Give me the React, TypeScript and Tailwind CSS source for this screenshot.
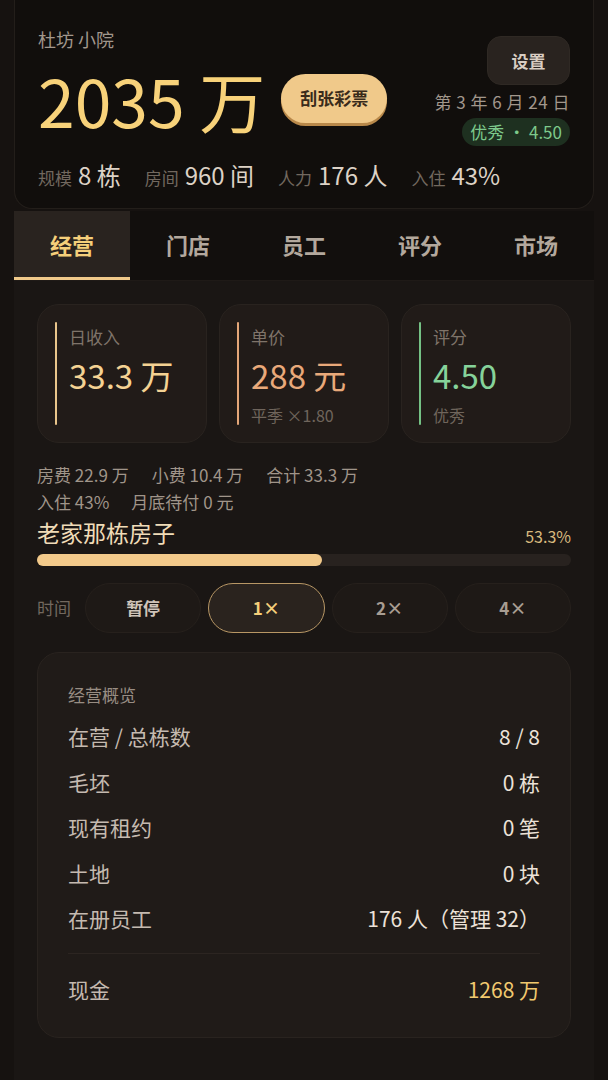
import { useState } from "react";

const FONT = { fontFamily: '"Noto Sans CJK SC", "Noto Sans", sans-serif' };

const TABS = ["经营", "门店", "员工", "评分", "市场"];

const SPEEDS = ["暂停", "1×", "2×", "4×"];

const OVERVIEW = [
  { label: "在营 / 总栋数", value: "8 / 8" },
  { label: "毛坯", value: "0 栋" },
  { label: "现有租约", value: "0 笔" },
  { label: "土地", value: "0 块" },
  { label: "在册员工", value: "176 人（管理 32）" },
];

function StatCard({
  label,
  value,
  sub,
  bar,
  tone,
}: {
  label: string;
  value: string;
  sub?: string;
  bar: string;
  tone: string;
}) {
  return (
    <div className="flex h-[139px] rounded-[22px] border border-[#29231f] bg-[#211b18] px-[17px] py-[17px]">
      <div className={`w-[2px] rounded-full ${bar}`} />
      <div className="flex flex-col pl-[12px] pt-[3px]">
        <span className="text-[17px] leading-[24px] text-[#7f746a]">{label}</span>
        <span className={`mt-[6px] text-[33px] leading-[40px] ${tone}`}>{value}</span>
        {sub && <span className="mt-[9px] text-[16px] leading-[22px] text-[#6f655c]">{sub}</span>}
      </div>
    </div>
  );
}

export default function App() {
  const [tab, setTab] = useState(0);
  const [speed, setSpeed] = useState(1);

  return (
    <div className="min-h-[1080px] w-[608px] bg-[#161210]" style={FONT}>
      <div className="mx-[14px] flex flex-col">
        {/* header */}
        <div className="h-[209px] rounded-b-[18px] border-x border-b border-[#231e1a] bg-[#110e0c] px-[23px] pt-[26px]">
          <div className="flex justify-between">
            <div className="flex flex-col">
              <span className="text-[18px] leading-[26px] text-[#a2978c]">杜坊 小院</span>
              <div className="mt-[12px] flex items-center">
                <span className="text-[66px] leading-[70px] text-[#f8d27a]">2035 万</span>
                <button className="ml-[16px] mb-[2px] h-[49px] w-[106px] rounded-full bg-[#f0c98a] text-[17px] font-bold text-[#3a2b1b] shadow-[0_3px_0_#b8884a]">
                  刮张彩票
                </button>
              </div>
            </div>
            <div className="flex flex-col items-end">
              <button className="mt-[10px] h-[49px] w-[83px] rounded-[14px] border border-[#2f2924] bg-[#29231f] text-[17px] font-bold text-[#d8cdc2]">
                设置
              </button>
              <span className="mt-[5px] text-[17px] leading-[24px] tracking-[0.5px] text-[#a2978c]">第 3 年 6 月 24 日</span>
              <span className="mt-[4px] rounded-full bg-[#1e3020] px-[8px] text-[17px] leading-[28px] text-[#7dc98b]">
                优秀 · 4.50
              </span>
            </div>
          </div>
          <div className="mt-[14px] flex items-baseline gap-[24px]">
            {[
              ["规模", "8 栋"],
              ["房间", "960 间"],
              ["人力", "176 人"],
              ["入住", "43%"],
            ].map(([k, v]) => (
              <span key={k} className="flex items-baseline gap-[6px]">
                <span className="text-[17px] text-[#72685f]">{k}</span>
                <span className="text-[24px] leading-[30px] text-[#ddd2c6]">{v}</span>
              </span>
            ))}
          </div>
        </div>

        {/* tabs */}
        <div className="mt-[2px] grid h-[70px] grid-cols-5 border-b border-[#1f1a17] bg-[#120f0d]">
          {TABS.map((t, i) => (
            <button
              key={t}
              onClick={() => setTab(i)}
              className={`relative pb-[3px] text-[22px] font-bold ${
                i === tab ? "bg-[#29231f] text-[#f5cf7a]" : "text-[#b3a89d]"
              }`}
            >
              {t}
              {i === tab && <span className="absolute inset-x-0 bottom-0 h-[3px] bg-[#f0c98a]" />}
            </button>
          ))}
        </div>

        {/* body */}
        <div className="flex min-h-[800px] flex-col bg-[#1a1614] px-[23px] pt-[23px]">
          <div className="grid grid-cols-3 gap-[12px]">
            <StatCard label="日收入" value="33.3 万" bar="bg-[#e9c58b]" tone="text-[#f4d293]" />
            <StatCard label="单价" value="288 元" sub="平季 ×1.80" bar="bg-[#e3a678]" tone="text-[#e9a97a]" />
            <StatCard label="评分" value="4.50" sub="优秀" bar="bg-[#74c184]" tone="text-[#86d39a]" />
          </div>

          <div className="mt-[18px] flex flex-col text-[17px] leading-[27px] text-[#a0958a]">
            <span className="flex gap-[23px]">
              <span>房费 22.9 万</span>
              <span>小费 10.4 万</span>
              <span>合计 33.3 万</span>
            </span>
            <span className="flex gap-[22px]">
              <span>入住 43%</span>
              <span>月底待付 0 元</span>
            </span>
          </div>

          <div className="mt-[1px] flex items-end justify-between">
            <span className="text-[23px] leading-[32px] text-[#f0dcb8]">老家那栋房子</span>
            <span className="text-[16px] leading-[24px] text-[#d8b97e]">53.3%</span>
          </div>
          <div className="mt-[6px] h-[12px] rounded-full bg-[#28221f]">
            <div className="h-full rounded-full bg-[#f2c98a]" style={{ width: "53.3%" }} />
          </div>

          <div className="mt-[17px] flex items-center gap-[7px]">
            <span className="w-[41px] text-[17px] text-[#72685f]">时间</span>
            {SPEEDS.map((s, i) => (
              <button
                key={s}
                onClick={() => setSpeed(i)}
                className={`h-[50px] flex-1 rounded-full border text-[17px] font-bold ${
                  i === speed
                    ? "border-[#b89765] bg-[#2a231e] text-[#f5cf7a]"
                    : i === 0
                      ? "border-[#26201c] bg-[#1e1916] text-[#cfc4b9]"
                      : "border-[#26201c] bg-[#1e1916] text-[#a89d92]"
                }`}
              >
                {s}
              </button>
            ))}
          </div>

          <div className="mt-[19px] rounded-[22px] border border-[#29231f] bg-[#201b18] px-[30px] pt-[30px] pb-[24px]">
            <div className="text-[17px] leading-[24px] text-[#988d83]">经营概览</div>
            <div className="mt-[7px] flex flex-col">
              {OVERVIEW.map((r) => (
                <div key={r.label} className="flex h-[45.5px] items-center justify-between text-[21px]">
                  <span className="text-[#c5bab0]">{r.label}</span>
                  <span className="text-[#ece2d8]">{r.value}</span>
                </div>
              ))}
            </div>
            <div className="mt-[11px] h-px bg-[#2c2521]" />
            <div className="mt-[14px] flex h-[45px] items-center justify-between text-[21px]">
              <span className="text-[#c5bab0]">现金</span>
              <span className="text-[#f1c96f]">1268 万</span>
            </div>
          </div>
        </div>
      </div>
    </div>
  );
}
